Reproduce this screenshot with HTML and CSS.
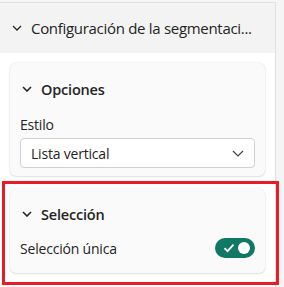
FILE: index.html
```html
<!DOCTYPE html>
<html lang="es">
<head>
    <meta charset="UTF-8">
    <title>Formato</title>
    <link rel="stylesheet" href="styles.css">
</head>
<body>
    <div class="pane">
        <div class="section-head">
            <svg class="chev" width="10" height="6" viewBox="0 0 10 6"><path d="M1 1l4 4 4-4" fill="none" stroke="#242424" stroke-width="1.3"/></svg>
            <span>Configuración de la segmentaci...</span>
        </div>

        <div class="section-body">
            <div class="card">
                <div class="card-head">
                    <svg class="chev" width="10" height="6" viewBox="0 0 10 6"><path d="M1 1l4 4 4-4" fill="none" stroke="#242424" stroke-width="1.6"/></svg>
                    <span>Opciones</span>
                </div>
                <div class="label">Estilo</div>
                <div class="dropdown">
                    <span>Lista vertical</span>
                    <svg width="12" height="7" viewBox="0 0 12 7"><path d="M1 1l5 5 5-5" fill="none" stroke="#424242" stroke-width="1.2"/></svg>
                </div>
            </div>

            <div class="card highlight">
                <div class="card-head">
                    <svg class="chev" width="10" height="6" viewBox="0 0 10 6"><path d="M1 1l4 4 4-4" fill="none" stroke="#242424" stroke-width="1.6"/></svg>
                    <span>Selección</span>
                </div>
                <div class="row">
                    <span>Selección única</span>
                    <div class="toggle">
                        <svg width="12" height="10" viewBox="0 0 12 10"><path d="M1.5 5.2l3 3 6-6.5" fill="none" stroke="#fff" stroke-width="1.8"/></svg>
                        <span class="knob"></span>
                    </div>
                </div>
                <div class="mark"></div>
            </div>

            <div class="next">Multiselección con CTRL</div>
        </div>
    </div>
</body>
</html>
```

FILE: styles.css
```css
* {
    margin: 0;
    padding: 0;
    box-sizing: border-box;
}

body {
    background: #f5f5f5;
    font-family: 'Segoe UI', 'Open Sans', 'Noto Sans', sans-serif;
    color: #242424;
    letter-spacing: -0.2px;
    height: 287px;
    overflow: hidden;
}

.pane {
    width: 276px;
    height: 287px;
    background: #fff;
    border-right: 1px solid #e0e0e0;
    border-top: 1px solid #e0e0e0;
    margin-top: 2px;
}

.section-head {
    display: flex;
    align-items: center;
    gap: 9px;
    height: 50px;
    padding-left: 12px;
    background: #f3f3f3;
    font-size: 15px;
    letter-spacing: -0.3px;
    white-space: nowrap;
}

.section-body {
    padding: 10px 10px 0 10px;
    display: flex;
    flex-direction: column;
    gap: 13px;
}

.card {
    position: relative;
    background: #fafafa;
    border-radius: 6px;
    box-shadow: 0 0 2px rgba(0,0,0,0.12), 0 1px 2px rgba(0,0,0,0.1);
    padding: 0 10px 8px 10px;
}

.card-head {
    display: flex;
    align-items: center;
    gap: 9px;
    height: 52px;
    padding-left: 2px;
    font-size: 14.5px;
    font-weight: 600;
}

.label {
    font-size: 14px;
    line-height: 20px;
    margin-bottom: 3px;
}

.dropdown {
    display: flex;
    align-items: center;
    justify-content: space-between;
    height: 30px;
    padding: 0 10px;
    background: #fff;
    border: 1px solid #d1d1d1;
    border-radius: 4px;
    font-size: 14px;
}

.highlight {
    padding-bottom: 12px;
}

.highlight .card-head {
    height: 50px;
}

.row {
    display: flex;
    align-items: center;
    justify-content: space-between;
    font-size: 14px;
    height: 26px;
    margin-top: -4px;
}

.toggle {
    display: flex;
    align-items: center;
    justify-content: space-between;
    width: 40px;
    height: 20px;
    padding: 0 5px 0 8px;
    background: #117865;
    border-radius: 10px;
}

.knob {
    width: 12px;
    height: 12px;
    border-radius: 50%;
    background: #fff;
}

.mark {
    position: absolute;
    left: -8px;
    right: -14px;
    top: -8px;
    bottom: -12px;
    border: 3px solid #e81c24;
}

.next {
    font-size: 14px;
    padding-left: 80px;
    margin-top: 6px;
}
```
